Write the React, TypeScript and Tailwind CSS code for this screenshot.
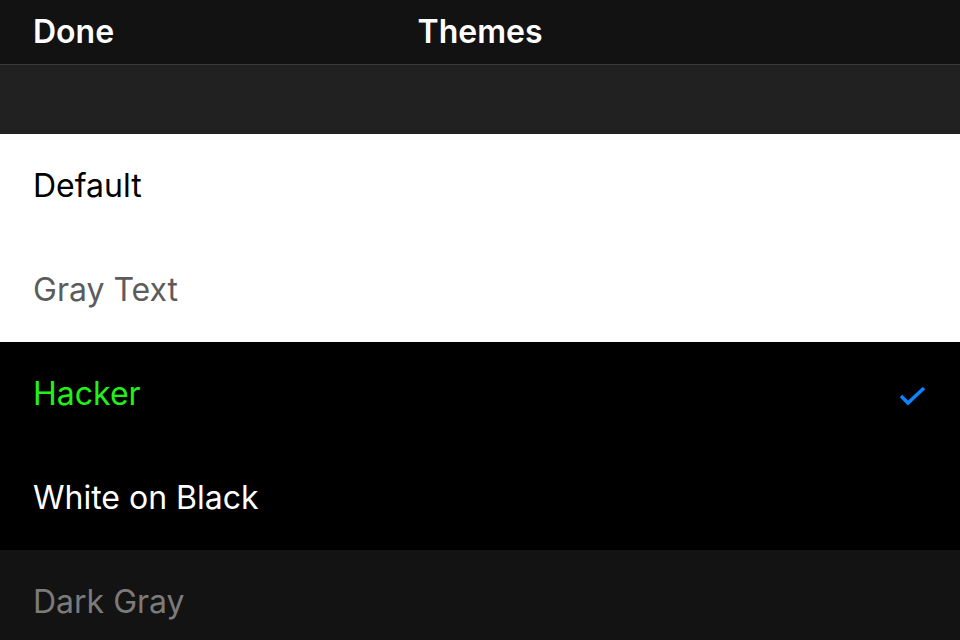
import { useState } from "react";

interface Theme {
  name: string;
  bg: string;
  text: string;
}

const THEMES: Theme[] = [
  { name: "Default", bg: "bg-white", text: "text-black" },
  { name: "Gray Text", bg: "bg-white", text: "text-[#5c5c5c]" },
  { name: "Hacker", bg: "bg-black", text: "text-[#22f01a]" },
  { name: "White on Black", bg: "bg-black", text: "text-white" },
  { name: "Dark Gray", bg: "bg-[#131313]", text: "text-[#7b7b7b]" },
];

function Check() {
  return (
    <svg width="30" height="24" viewBox="0 0 30 24" className="mt-[5px] text-[#0a84ff]">
      <path d="M3 11 L10 18 L26 3" fill="none" stroke="currentColor" strokeWidth="3.5" />
    </svg>
  );
}

export default function App() {
  const [selected, setSelected] = useState("Hacker");

  return (
    <div className="h-[640px] w-[960px] overflow-hidden bg-[#131313] font-['Inter',sans-serif]">
      {/* 상단 바 */}
      <div className="relative flex h-[65px] items-center border-b border-[#3a3a3a] bg-[#121212] px-[33px]">
        <button className="text-[32px] font-semibold text-white">Done</button>
        <div className="pointer-events-none absolute inset-x-0 text-center text-[32px] font-semibold text-white">
          Themes
        </div>
      </div>

      <div className="h-[69px] bg-[#212121]" />

      {THEMES.map((t) => (
        <div
          key={t.name}
          onClick={() => setSelected(t.name)}
          className={`flex h-[104px] items-center justify-between pl-[33px] pr-[32px] ${t.bg}`}
        >
          <span className={`text-[32px] ${t.text}`}>{t.name}</span>
          {selected === t.name && <Check />}
        </div>
      ))}
    </div>
  );
}
